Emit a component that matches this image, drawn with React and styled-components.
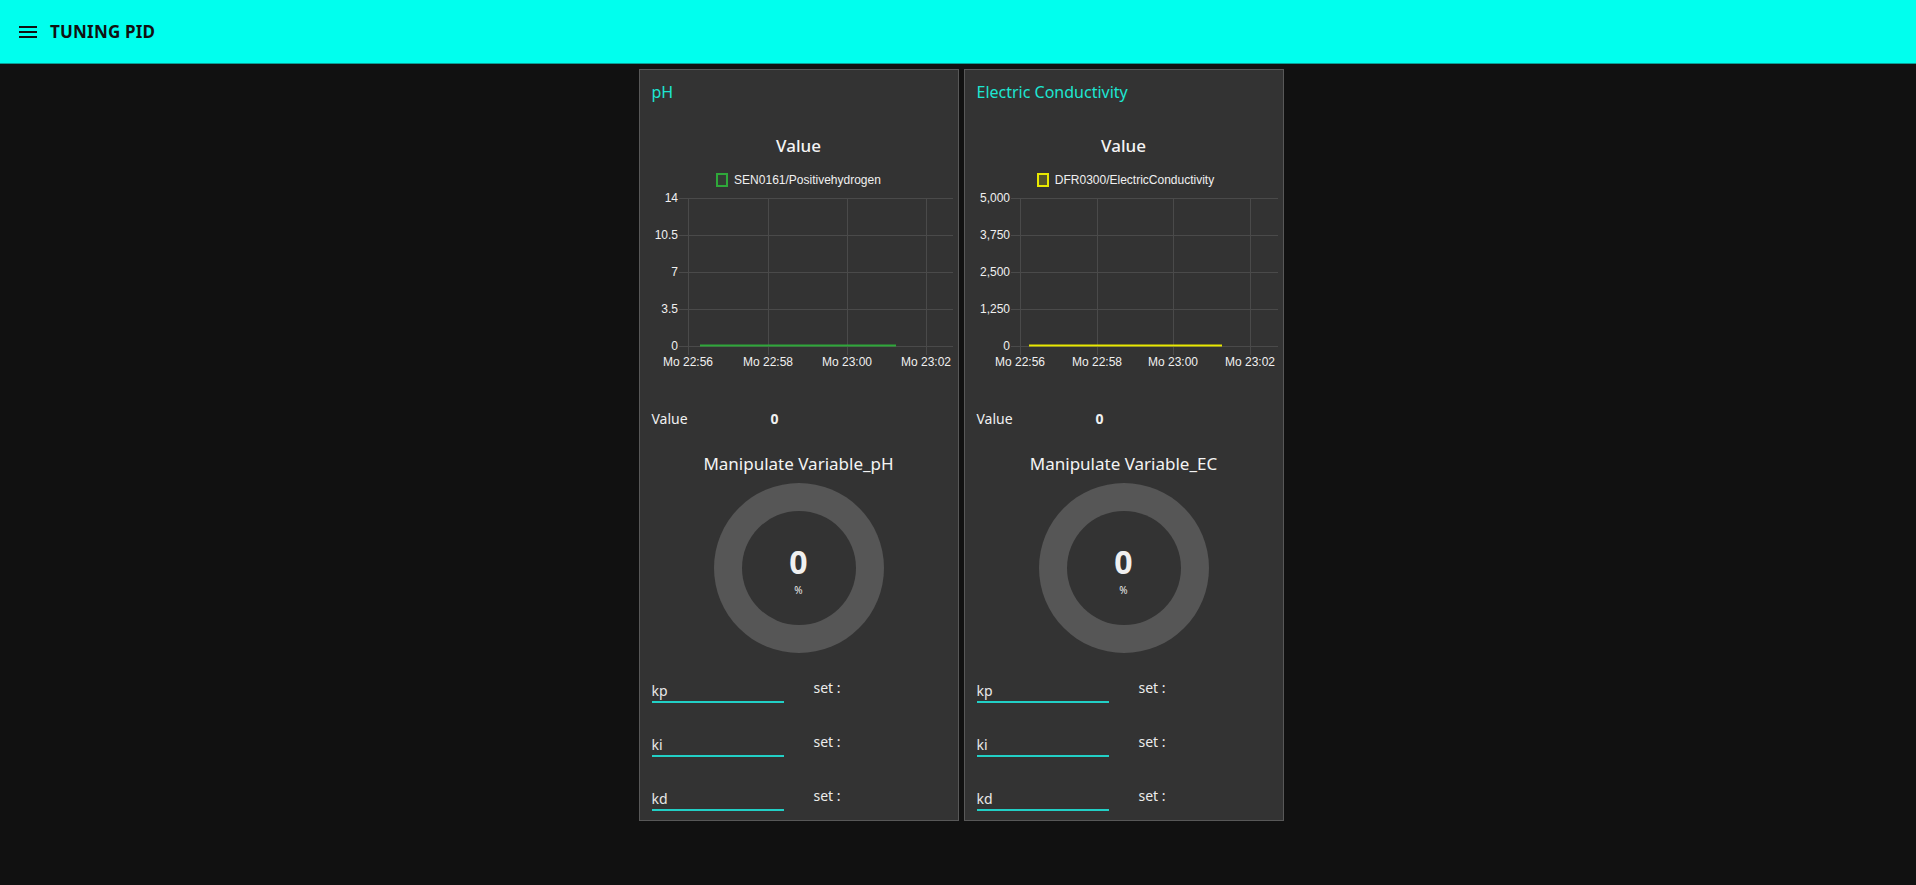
import React from 'react'
import styled, { createGlobalStyle } from 'styled-components'

const GlobalStyle = createGlobalStyle`
  html, body {
    margin: 0;
    padding: 0;
    background: #111111;
    font-family: 'Noto Sans', 'DejaVu Sans', sans-serif;
    color: #eeeeee;
  }
`

const Toolbar = styled.header`
  height: 63px;
  background: #00ffee;
  display: flex;
  align-items: center;
  padding-left: 16px;
  gap: 10px;
  box-shadow: 0 1px 0 #0a9e96;
`

const MenuIcon = styled.svg`
  width: 24px;
  height: 24px;
`

const ToolbarTitle = styled.h1`
  margin: 0;
  font-size: 17px;
  font-weight: 700;
  color: #111111;
  letter-spacing: 0.2px;
`

const Content = styled.main`
  display: flex;
  justify-content: center;
  gap: 5px;
  padding: 6px 0 0 6px;
`

const Card = styled.section`
  width: 318px;
  height: 750px;
  background: #333333;
  border: 1px solid #585858;
  display: flex;
  flex-direction: column;
`

const GroupTitle = styled.div`
  height: 44px;
  line-height: 44px;
  padding-left: 12px;
  font-size: 16px;
  color: #1de6d2;
`

const ChartBlock = styled.div`
  height: 280px;
  display: flex;
  flex-direction: column;
  align-items: center;
`

const ChartTitle = styled.div`
  margin-top: 22px;
  height: 20px;
  line-height: 20px;
  font-size: 17px;
  font-weight: 500;
  color: #f4f4f4;
`

const Legend = styled.div`
  margin-top: 17px;
  height: 14px;
  display: flex;
  align-items: center;
  gap: 6px;
  font-family: 'Liberation Sans', Arial, sans-serif;
  font-size: 12px;
  color: #f0f0f0;
  margin-left: ${p => p.$shift}px;
`

const LegendBox = styled.span`
  box-sizing: border-box;
  width: 12px;
  height: 14px;
  border: 2px solid ${p => p.$color};
  background: ${p => p.$fill};
`

const Plot = styled.svg`
  display: block;
  width: 318px;
  height: 185px;
  font-family: 'Liberation Sans', Arial, sans-serif;
  font-size: 12px;
`

const ValueRow = styled.div`
  height: 48px;
  display: flex;
  align-items: center;
  padding-left: 12px;
  font-size: 14px;
`

const ValueLabel = styled.span`
  width: 119px;
  color: #f0f0f0;
`

const ValueNumber = styled.span`
  font-weight: 700;
  color: #f0f0f0;
`

const GaugeBlock = styled.div`
  height: 233px;
  display: flex;
  flex-direction: column;
  align-items: center;
`

const GaugeTitle = styled.div`
  margin-top: 10px;
  height: 24px;
  line-height: 24px;
  font-size: 17px;
  color: #f4f4f4;
`

const Donut = styled.div`
  margin-top: 7px;
  width: 170px;
  height: 170px;
  border-radius: 50%;
  background: #565656;
  display: flex;
  align-items: center;
  justify-content: center;
`

const DonutHole = styled.div`
  width: 114px;
  height: 114px;
  border-radius: 50%;
  background: #333333;
  display: flex;
  flex-direction: column;
  align-items: center;
  justify-content: center;
`

const DonutValue = styled.div`
  font-size: 32px;
  line-height: 44px;
  font-weight: 700;
  color: #f0f0f0;
`

const DonutUnit = styled.div`
  font-size: 10px;
  line-height: 12px;
  color: #e8e8e8;
`

const Params = styled.div`
  display: flex;
  flex-direction: column;
  gap: 24px;
`

const ParamRow = styled.div`
  height: 30px;
  display: flex;
  padding-left: 12px;
`

const Field = styled.div`
  width: 132px;
  height: 28px;
  border-bottom: 2px solid #22d0c6;
  display: flex;
  align-items: flex-end;
  padding-bottom: 1px;
  box-sizing: border-box;
  font-size: 14px;
  color: #e8e8e8;
`

const SetText = styled.span`
  margin-left: 30px;
  margin-top: 3px;
  font-size: 14px;
  color: #ececec;
`

const gridColor = '#4a4a4a'

const ChartPlot = ({ yLabels, yLabelX, left, verticals, line, color }) => {
  const rows = [11, 48, 85, 122, 159]
  const xLabels = ['Mo 22:56', 'Mo 22:58', 'Mo 23:00', 'Mo 23:02']
  return (
    <Plot viewBox="0 0 318 185">
      {rows.map(y => (
        <line key={'h' + y} x1={left - 9} x2={313} y1={y + 0.5} y2={y + 0.5} stroke={gridColor} strokeWidth="1" />
      ))}
      {verticals.map(x => (
        <line key={'v' + x} x1={x + 0.5} x2={x + 0.5} y1={11} y2={168} stroke={gridColor} strokeWidth="1" />
      ))}
      {yLabels.map((t, i) => (
        <text key={t} x={yLabelX} y={rows[i] + 4} textAnchor="end" fill="#f0f0f0">{t}</text>
      ))}
      {xLabels.map((t, i) => (
        <text key={t} x={verticals[i]} y={179} textAnchor="middle" fill="#f0f0f0">{t}</text>
      ))}
      <line x1={line[0]} x2={line[1]} y1={158.5} y2={158.5} stroke={color} strokeWidth="2" />
    </Plot>
  )
}

const cards = [
  {
    title: 'pH',
    series: 'SEN0161/Positivehydrogen',
    color: '#2fa83a',
    fill: 'rgba(47,168,58,0.08)',
    shift: 0,
    yLabels: ['14', '10.5', '7', '3.5', '0'],
    yLabelX: 38,
    left: 48,
    verticals: [48, 128, 207, 286],
    line: [60, 256],
    gauge: 'Manipulate Variable_pH',
  },
  {
    title: 'Electric Conductivity',
    series: 'DFR0300/ElectricConductivity',
    color: '#e8e800',
    fill: 'rgba(232,232,0,0.18)',
    shift: 4,
    yLabels: ['5,000', '3,750', '2,500', '1,250', '0'],
    yLabelX: 45,
    left: 55,
    verticals: [55, 132, 208, 285],
    line: [64, 257],
    gauge: 'Manipulate Variable_EC',
  },
]

const App = () => {
  return (
    <>
      <GlobalStyle />
      <Toolbar>
        <MenuIcon viewBox="0 0 24 24">
          <path d="M3 18h18v-2H3v2zm0-5h18v-2H3v2zm0-7v2h18V6H3z" fill="#111111" />
        </MenuIcon>
        <ToolbarTitle>TUNING PID</ToolbarTitle>
      </Toolbar>
      <Content>
        {cards.map(c => (
          <Card key={c.title}>
            <GroupTitle>{c.title}</GroupTitle>
            <ChartBlock>
              <ChartTitle>Value</ChartTitle>
              <Legend $shift={c.shift}>
                <LegendBox $color={c.color} $fill={c.fill} />
                {c.series}
              </Legend>
              <ChartPlot {...c} />
            </ChartBlock>
            <ValueRow>
              <ValueLabel>Value</ValueLabel>
              <ValueNumber>0</ValueNumber>
            </ValueRow>
            <GaugeBlock>
              <GaugeTitle>{c.gauge}</GaugeTitle>
              <Donut>
                <DonutHole>
                  <DonutValue>0</DonutValue>
                  <DonutUnit>%</DonutUnit>
                </DonutHole>
              </Donut>
            </GaugeBlock>
            <Params>
              {['kp', 'ki', 'kd'].map(k => (
                <ParamRow key={k}>
                  <Field>{k}</Field>
                  <SetText>set :</SetText>
                </ParamRow>
              ))}
            </Params>
          </Card>
        ))}
      </Content>
    </>
  )
}

export default App
